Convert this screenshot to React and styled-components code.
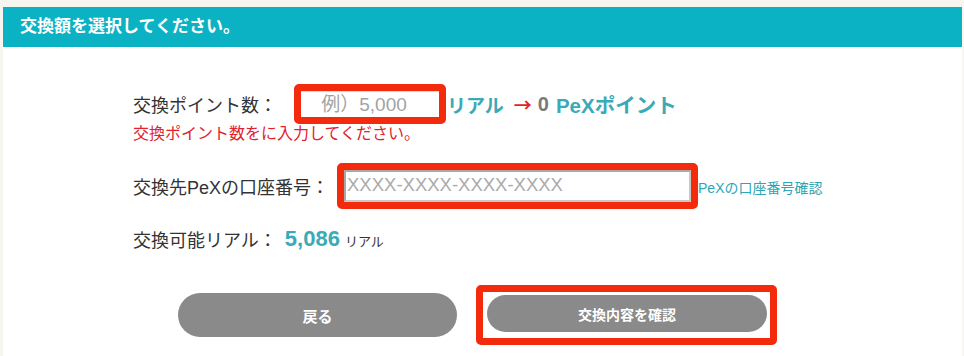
import React from "react";
import styled, { createGlobalStyle } from "styled-components";

const Global = createGlobalStyle`
  html, body { margin: 0; padding: 0; }
  body {
    background: #f7f5f0;
    font-family: "Liberation Sans", "Noto Sans CJK JP", sans-serif;
    color: #333;
  }
`;

const Card = styled.div`
  margin: 7px 2px 0 3px;
  background: #fff;
  min-height: 349px;
`;

const Header = styled.div`
  height: 40px;
  background: #0bb2c4;
  color: #fff;
  font-weight: bold;
  font-size: 17px;
  line-height: 40px;
  padding-left: 17px;
`;

const Body = styled.div`
  padding: 37px 0 0 130px;
`;

const Row = styled.div`
  display: flex;
  align-items: center;
  margin-top: ${(p) => p.$top || 0}px;
`;

const Label = styled.span`
  font-size: 18px;
  color: #333;
  margin-right: ${(p) => p.$gap || 0}px;
  white-space: nowrap;
`;

const Highlight = styled.div`
  display: inline-flex;
  border: 7px solid #f42a0c;
  border-radius: 5px;
  padding: ${(p) => p.$pad || 0};
  background: #fff;
`;

const SmallInput = styled.input`
  width: 138px;
  height: 26px;
  box-sizing: border-box;
  border: none;
  border-top: 1px solid #ddd;
  outline: none;
  font-family: inherit;
  font-size: 19px;
  text-align: center;
  color: #333;
  padding: 0 12px 0 0;
  &::placeholder { color: #a3a3a3; }
`;

const WideInput = styled.input`
  width: 347px;
  height: 32px;
  box-sizing: border-box;
  border: 2px solid #a8a8a8;
  border-right-color: #c8c8c8;
  border-bottom-color: #c8c8c8;
  outline: none;
  font-family: inherit;
  font-size: 18.5px;
  padding: 0 0 2px 1px;
  color: #333;
  &::placeholder { color: #ababab; }
`;

const Teal = styled.span`
  color: #3aaab8;
  font-weight: bold;
  font-size: ${(p) => p.$size || 19}px;
  margin-left: ${(p) => p.$ml || 0}px;
`;

const Arrow = styled.span`
  color: #e8221c;
  font-weight: bold;
  font-size: 18px;
  margin-left: 10px;
  font-family: "Noto Sans CJK JP", sans-serif;
`;

const Zero = styled.span`
  color: #7a7a7a;
  font-weight: bold;
  font-size: 20px;
  margin: 0 7px 0 6px;
`;

const ErrorText = styled.div`
  color: #e3212c;
  font-size: 16px;
  line-height: 20px;
`;

const Link = styled.a`
  color: #2aa6b6;
  font-size: 14px;
  text-decoration: none;
  margin-top: 2px;
`;

const Small = styled.span`
  font-size: 13px;
  color: #333;
  margin-left: 5px;
  margin-top: 3px;
`;

const Buttons = styled.div`
  display: flex;
  align-items: center;
  gap: 19px;
  margin: 33px 0 0 175px;
`;

const PillButton = styled.button`
  width: ${(p) => p.$w}px;
  height: ${(p) => p.$h}px;
  border: none;
  border-radius: ${(p) => p.$h / 2}px;
  background: #8a8a8a;
  color: #fff;
  font-family: inherit;
  font-weight: bold;
  font-size: ${(p) => p.$fs || 15}px;
  cursor: pointer;
`;

export default function App() {
  return (
    <>
      <Global />
      <Card>
        <Header>交換額を選択してください。</Header>
        <Body>
          <Row>
            <Label $gap={17}>交換ポイント数：</Label>
            <Highlight>
              <SmallInput placeholder="例）5,000" />
            </Highlight>
            <Teal $ml={1}>リアル</Teal>
            <Arrow>→</Arrow>
            <Zero>0</Zero>
            <Teal $size={20.5}>PeXポイント</Teal>
          </Row>
          <ErrorText>交換ポイント数をに入力してください。</ErrorText>
          <Row $top={19}>
            <Label $gap={8}>交換先PeXの口座番号：</Label>
            <Highlight>
              <WideInput placeholder="XXXX-XXXX-XXXX-XXXX" />
            </Highlight>
            <Link href="#">PeXの口座番号確認</Link>
          </Row>
          <Row $top={17}>
            <Label $gap={8}>交換可能リアル：</Label>
            <Teal $size={22}>5,086</Teal>
            <Small>リアル</Small>
          </Row>
        </Body>
        <Buttons>
          <PillButton $w={279} $h={44}>戻る</PillButton>
          <Highlight $pad="3px 3px 6px 4px">
            <PillButton $w={280} $h={37} $fs={14}>交換内容を確認</PillButton>
          </Highlight>
        </Buttons>
      </Card>
    </>
  );
}
